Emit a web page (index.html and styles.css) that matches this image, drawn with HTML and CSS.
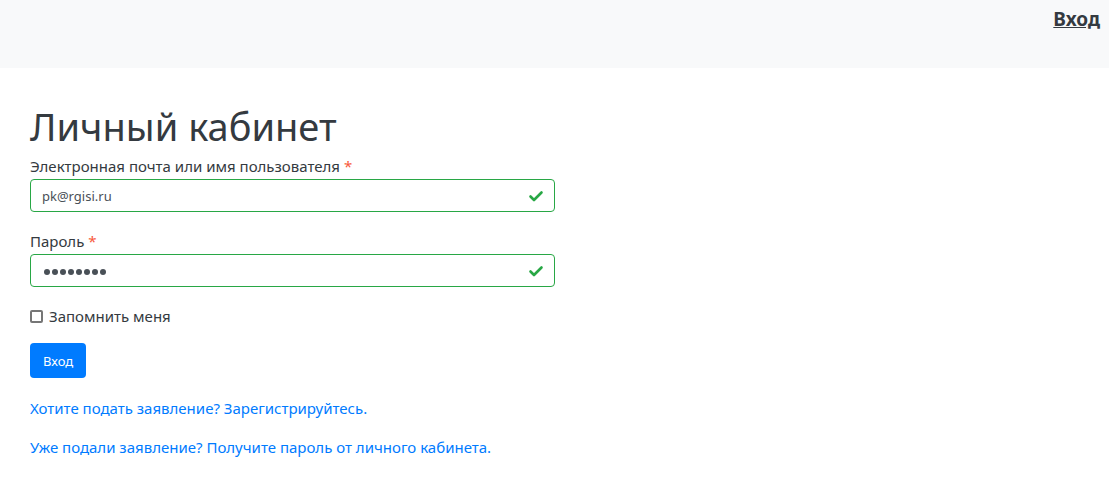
FILE: index.html
```html
<!DOCTYPE html>
<html lang="ru">
<head>
<meta charset="utf-8">
<title>Личный кабинет</title>
<link rel="stylesheet" href="styles.css">
</head>
<body>
<header class="topbar">
  <a class="login-link" href="#">Вход</a>
</header>
<main class="content">
  <h1 class="title">Личный кабинет</h1>
  <form class="form">
    <div class="field">
      <label class="label">Электронная почта или имя пользователя<span class="req">*</span></label>
      <div class="input valid">
        <span class="value">pk@rgisi.ru</span>
        <svg class="check" viewBox="0 0 16 16" width="16" height="16"><path d="M2.5 8.5 L6 12 L13.5 4.5" fill="none" stroke="#28a745" stroke-width="2.6" stroke-linecap="round" stroke-linejoin="round"/></svg>
      </div>
    </div>
    <div class="field">
      <label class="label">Пароль<span class="req">*</span></label>
      <div class="input valid">
        <span class="dots"><i></i><i></i><i></i><i></i><i></i><i></i><i></i><i></i></span>
        <svg class="check" viewBox="0 0 16 16" width="16" height="16"><path d="M2.5 8.5 L6 12 L13.5 4.5" fill="none" stroke="#28a745" stroke-width="2.6" stroke-linecap="round" stroke-linejoin="round"/></svg>
      </div>
    </div>
    <label class="remember"><span class="box"></span>Запомнить меня</label>
    <button class="btn" type="button">Вход</button>
  </form>
  <p class="link-row"><a href="#">Хотите подать заявление? Зарегистрируйтесь.</a></p>
  <p class="link-row"><a href="#">Уже подали заявление? Получите пароль от личного кабинета.</a></p>
</main>
</body>
</html>
```
FILE: styles.css
```css
* { box-sizing: border-box; }
body {
  margin: 0;
  font-family: "Noto Sans", "Open Sans", sans-serif;
  font-size: 15px;
  color: #343a40;
  background: #fff;
}
.topbar {
  height: 68px;
  background: #f8f9fa;
  display: flex;
  justify-content: flex-end;
  align-items: flex-start;
  padding: 6px 9px 0 0;
}
.login-link {
  font-weight: 700;
  font-size: 19px;
  color: #343a40;
  text-decoration: underline;
}
.content {
  padding: 34px 30px 0 30px;
}
.title {
  font-size: 38px;
  font-weight: 400;
  margin: 0 0 6px 0;
  line-height: 48px;
  color: #343a40;
}
.form { width: 525px; }
.field { margin-bottom: 19px; }
.label { display: block; margin-bottom: 3px; line-height: 20px; }
.req { color: #f8593b; margin-left: 4px; }
.input {
  height: 33px;
  border: 1px solid #28a745;
  border-radius: 4px;
  display: flex;
  align-items: center;
  justify-content: space-between;
  padding: 0 10px 0 11px;
}
.value { font-size: 13px; color: #495057; }
.dots { display: flex; gap: 2px; padding: 2px 0 0 2px; }
.dots i { display: block; width: 6px; height: 6px; border-radius: 50%; background: #495057; }
.check { display: block; }
.remember {
  display: flex;
  align-items: center;
  gap: 6px;
  margin-top: 4px;
  line-height: 20px;
}
.box {
  width: 13px; height: 13px;
  border: 2px solid #767676;
  border-radius: 2px;
  background: #fff;
}
.btn {
  margin-top: 17px;
  display: block;
  background: #007bff;
  color: #fff;
  border: none;
  border-radius: 4px;
  height: 35px;
  padding: 0 13px;
  font-family: inherit;
  font-size: 13px;
}
.link-row { margin: 20px 0 0 0; line-height: 20px; }
.link-row + .link-row { margin-top: 19px; }
.link-row a { color: #007bff; text-decoration: none; }
```
